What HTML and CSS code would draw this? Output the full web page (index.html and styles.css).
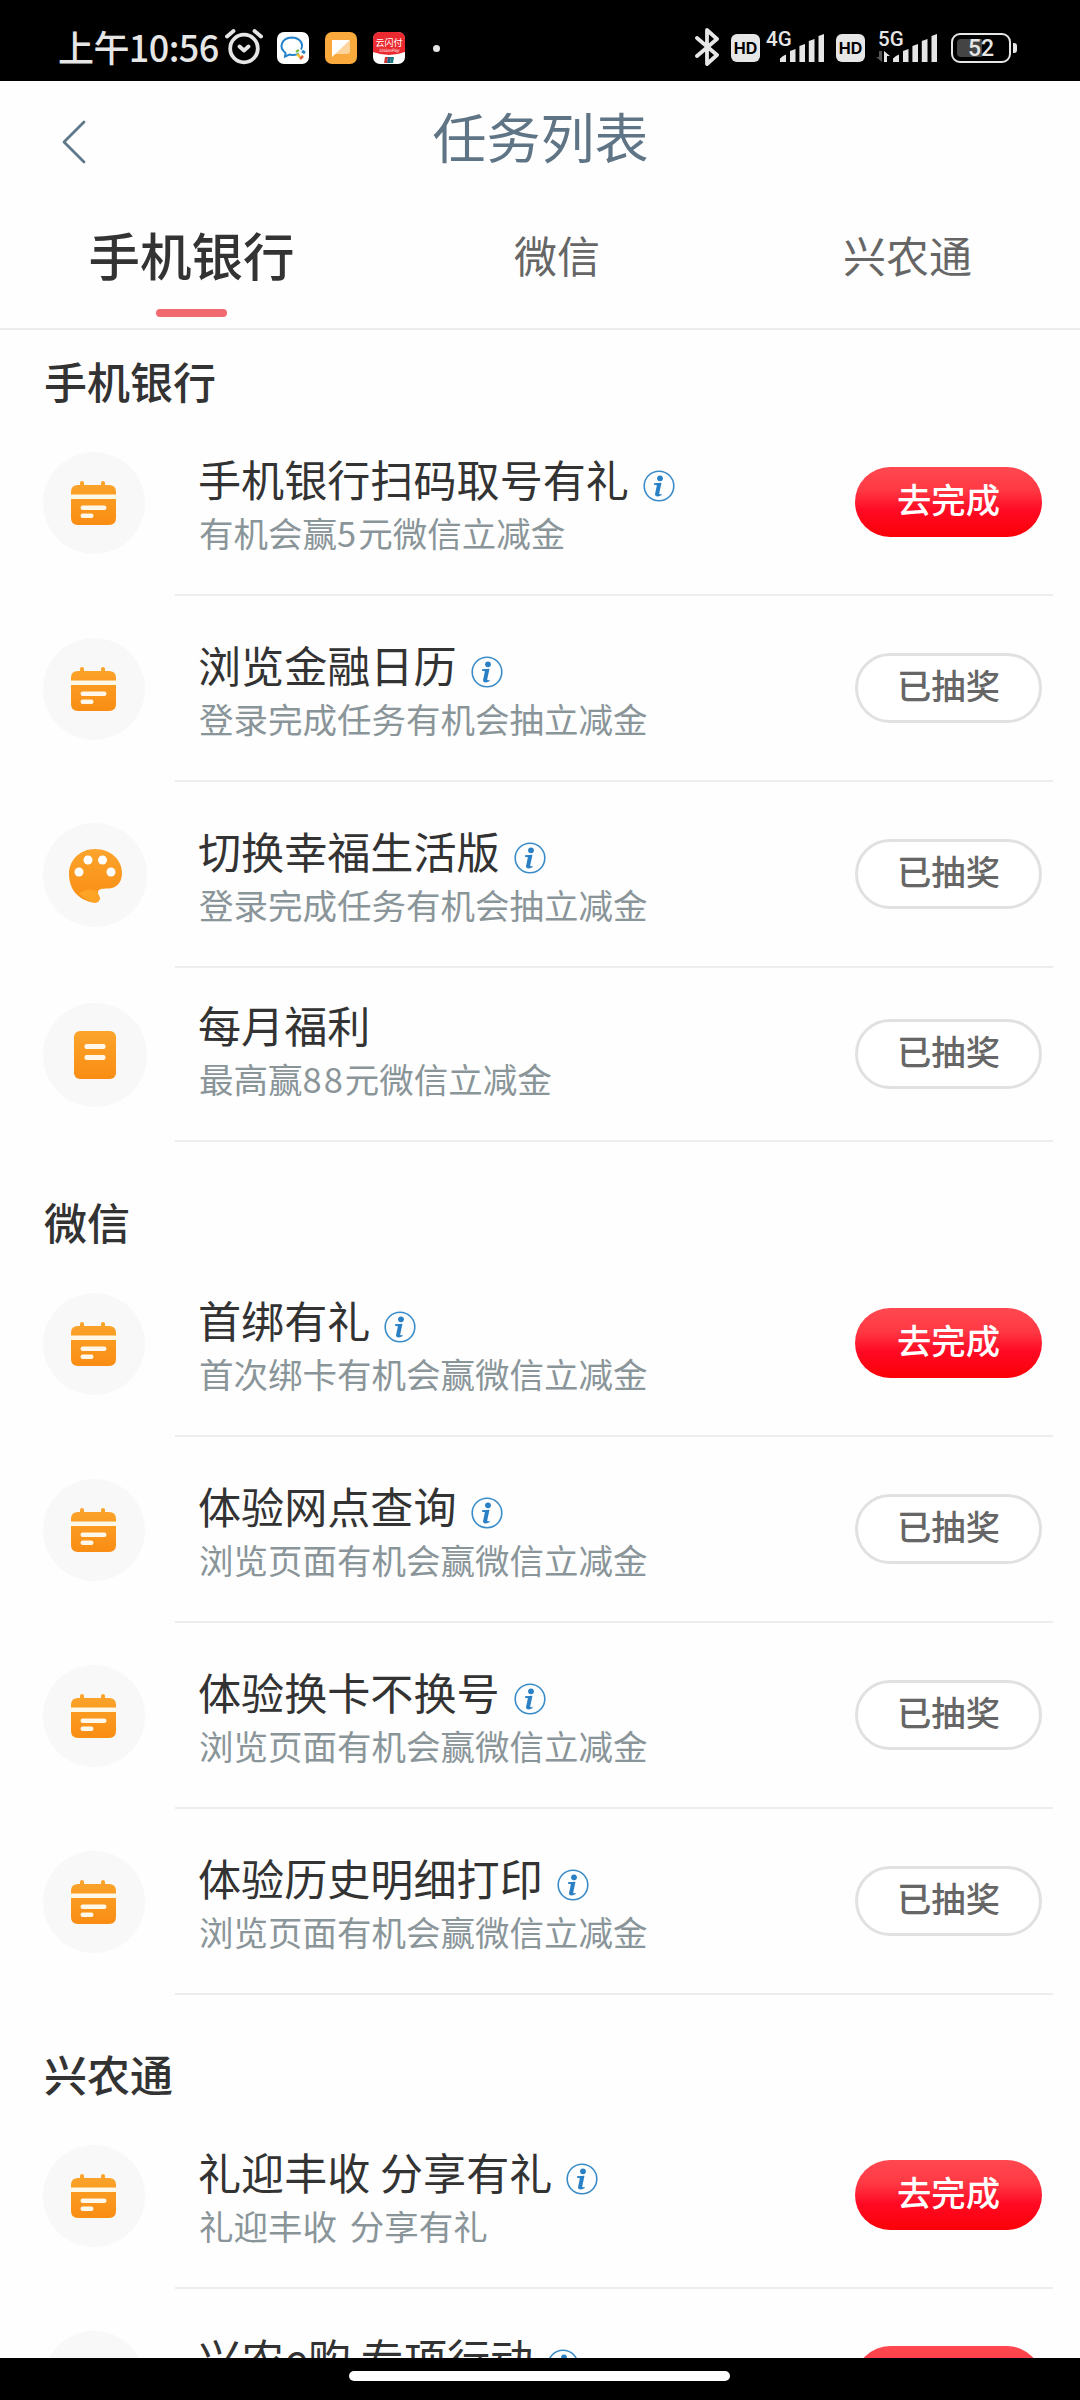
FILE: index.html
```html
<!DOCTYPE html>
<html lang="zh-CN">
<head>
<meta charset="utf-8">
<title>任务列表</title>
<link rel="stylesheet" href="styles.css">
</head>
<body>
<svg class="defs" width="0" height="0" aria-hidden="true">
  <defs>
    <linearGradient id="orange" x1="0" y1="0" x2="0" y2="1">
      <stop offset="0" stop-color="#fba42c"/><stop offset="1" stop-color="#fa8d13"/>
    </linearGradient>
    <symbol id="calendar" viewBox="0 0 102 102">
      <path fill="url(#orange)" d="M39 29q2 0 2 2v2h17v-2q0-2 2-2t2 2v2h4q7 0 7 7v26q0 7-7 7H35q-7 0-7-7V40q0-7 7-7h2v-2q0-2 2-2z"/>
      <path fill="#fff8e6" d="M28 42.500h45v4.500H28z"/>
      <rect x="37.500" y="53.500" width="26" height="4.500" rx="2.200" fill="#fff8ea"/>
      <rect x="37.500" y="61.500" width="13" height="4.500" rx="2.200" fill="#fff8ea"/>
    </symbol>
    <symbol id="palette" viewBox="0 0 104 104">
      <path fill="url(#orange)" d="M52 26C68 26 79 37 79 50C79 60 73 65.500 65 65.500C59 65.500 54.500 66 55 70C55.500 73 58 74 56.500 77C55.500 79.500 53 80 50 79.500C36 77 26 67 26 51C26 37 37 26 52 26z"/>
      <path fill="#ffb534" opacity=".5" d="M36 70q10-6 18.800-2c-.5 4 3.200 6 1.700 9-1 2.500-3.500 3-6.500 2.500q-9-2-14-9.500z"/>
      <g fill="#fff"><circle cx="45" cy="37" r="4.500"/><circle cx="59.500" cy="37" r="4.500"/><circle cx="36" cy="49" r="4.500"/><circle cx="68" cy="49" r="4.500"/></g>
    </symbol>
    <symbol id="note" viewBox="0 0 104 104">
      <rect x="31" y="28" width="42" height="48" rx="6" fill="url(#orange)"/>
      <rect x="41.500" y="41" width="21" height="5" rx="2" fill="#fff8ea"/>
      <rect x="41.500" y="52" width="21" height="5" rx="2" fill="#fff8ea"/>
    </symbol>
    <symbol id="info" viewBox="0 0 32 32">
      <circle cx="16" cy="16" r="14.800" fill="none" stroke="#3a8cc8" stroke-width="1.600"/>
      <circle cx="17" cy="8.300" r="2.900" fill="#2a80c4"/>
      <path fill="#2a80c4" d="M11 13.200l7.500-.4-2.300 10.700q-.1 1.300 2.600.2l-.4 1.500q-6.500 2.800-6.400-.9l1.900-9-2.900-.6z"/>
    </symbol>
    <symbol id="bars" viewBox="0 0 45 30">
      <path fill="#e6e6e6" d="M0 29v-3.500q3-3 6-4V29zM10 29V18l5.500-2v13zM19.400 29V13l5.600-2v18zM28.800 29V8l5.700-2v23zM38.500 29V3l5.500-2v28z"/>
    </symbol>
  </defs>
</svg>

<header class="status">
  <div class="status-left">
    <span class="clock">上午10:56</span>
    <svg class="alarm" viewBox="0 0 38 36"><g fill="none" stroke="#e6e6e6" stroke-width="3.800" stroke-linecap="round" stroke-linejoin="round"><circle cx="19" cy="19.500" r="13.800"/><path d="M2 7.500L8.500 2M36 7.500L29.500 2M14.500 17.500l4.500 4 4.500-4"/></g></svg>
    <svg class="app" viewBox="0 0 32 32"><rect width="32" height="32" rx="7" fill="#fff"/><path d="M22 21.500q-4 2.500-9.500 1L8 24.500l.5-3.500C1 15 5 6 14.500 5.500 23 5.500 27 12 24 17.500" fill="none" stroke="#2583cb" stroke-width="2"/><path d="M19 20l3-2" stroke="#7cc04b" stroke-width="2.500"/><path d="M25 19l3 2" stroke="#2583cb" stroke-width="3"/><path d="M20 22l3 3" stroke="#f2c32c" stroke-width="2.500"/><path d="M23 27l3-3" stroke="#e55b3c" stroke-width="2.500"/></svg>
    <svg class="app" viewBox="0 0 32 32"><rect width="32" height="32" rx="7" fill="#faa93c"/><path fill="#fcd49c" d="M7 9h18v10q0 3-3 3H7z"/><path fill="#fff" d="M7 8h18L7 25z"/></svg>
    <svg class="app" viewBox="0 0 32 32"><rect width="32" height="32" rx="7" fill="#fff"/><path fill="#ea2a30" d="M0 20V7q0-7 7-7h18q7 0 7 7v13q-16 6-32 0z"/><text x="16" y="14" class="pay">云闪付</text><text x="16" y="20" class="pay-en">UnionPay</text><path fill="#c33" d="M12 25h3l-1 6h-3z"/><path fill="#235a80" d="M15 25h3l-1 6h-3z"/><path fill="#167a78" d="M18 25h3l-1 6h-3z"/></svg>
    <span class="dot"></span>
  </div>
  <div class="status-right">
    <svg class="bt" viewBox="0 0 24 38"><path d="M2 10l20 17-10 9V2l10 9L2 28" fill="none" stroke="#e6e6e6" stroke-width="3.800" stroke-linejoin="round" stroke-linecap="round"/></svg>
    <span class="hd hd-one">HD</span>
    <span class="net">4G</span>
    <svg class="bars"><use href="#bars"/></svg>
    <span class="hd hd-two">HD</span>
    <span class="net net-two">5G<svg class="arrows" viewBox="0 0 14 11"><path fill="#555" d="M3 0h3v11L0 6h3z"/><path fill="#e6e6e6" d="M8 0l6 5h-3v6H8z"/></svg></span>
    <svg class="bars"><use href="#bars"/></svg>
    <span class="battery"><span class="level">52</span></span>
    <span class="cap"></span>
  </div>
</header>

<nav class="title-bar">
  <svg class="back" viewBox="0 0 24 44"><path d="M22 2L2 22l20 20" fill="none" stroke="#5f7888" stroke-width="2.800" stroke-linecap="round" stroke-linejoin="round"/></svg>
  <h1>任务列表</h1>
</nav>

<div class="tabs">
  <span class="tab active">手机银行</span>
  <span class="tab">微信</span>
  <span class="tab last">兴农通</span>
</div>

<main>
  <section>
    <h2>手机银行</h2>
    <article class="task"><svg class="icon"><use href="#calendar"/></svg><div class="body"><div class="text"><h3>手机银行扫码取号有礼<svg class="info"><use href="#info"/></svg></h3><p>有机会赢<span class="num">5</span>元微信立减金</p></div><button class="btn go">去完成</button></div></article>
    <article class="task"><svg class="icon"><use href="#calendar"/></svg><div class="body"><div class="text"><h3>浏览金融日历<svg class="info"><use href="#info"/></svg></h3><p>登录完成任务有机会抽立减金</p></div><button class="btn">已抽奖</button></div></article>
    <article class="task"><svg class="icon wide"><use href="#palette"/></svg><div class="body"><div class="text"><h3>切换幸福生活版<svg class="info"><use href="#info"/></svg></h3><p>登录完成任务有机会抽立减金</p></div><button class="btn">已抽奖</button></div></article>
    <article class="task plain"><svg class="icon wide"><use href="#note"/></svg><div class="body"><div class="text"><h3>每月福利</h3><p>最高赢<span class="num">88</span>元微信立减金</p></div><button class="btn">已抽奖</button></div></article>
  </section>
  <section>
    <h2>微信</h2>
    <article class="task"><svg class="icon"><use href="#calendar"/></svg><div class="body"><div class="text"><h3>首绑有礼<svg class="info"><use href="#info"/></svg></h3><p>首次绑卡有机会赢微信立减金</p></div><button class="btn go">去完成</button></div></article>
    <article class="task"><svg class="icon"><use href="#calendar"/></svg><div class="body"><div class="text"><h3>体验网点查询<svg class="info"><use href="#info"/></svg></h3><p>浏览页面有机会赢微信立减金</p></div><button class="btn">已抽奖</button></div></article>
    <article class="task"><svg class="icon"><use href="#calendar"/></svg><div class="body"><div class="text"><h3>体验换卡不换号<svg class="info"><use href="#info"/></svg></h3><p>浏览页面有机会赢微信立减金</p></div><button class="btn">已抽奖</button></div></article>
    <article class="task"><svg class="icon"><use href="#calendar"/></svg><div class="body"><div class="text"><h3>体验历史明细打印<svg class="info"><use href="#info"/></svg></h3><p>浏览页面有机会赢微信立减金</p></div><button class="btn">已抽奖</button></div></article>
  </section>
  <section>
    <h2>兴农通</h2>
    <article class="task"><svg class="icon"><use href="#calendar"/></svg><div class="body"><div class="text"><h3>礼迎丰收 分享有礼<svg class="info"><use href="#info"/></svg></h3><p class="spaced">礼迎丰收 分享有礼</p></div><button class="btn go">去完成</button></div></article>
    <article class="task"><svg class="icon"><use href="#calendar"/></svg><div class="body"><div class="text"><h3>兴农e购 专项行动<svg class="info"><use href="#info"/></svg></h3></div><button class="btn go">去完成</button></div></article>
  </section>
</main>

<footer class="home"><span class="pill"></span></footer>
</body>
</html>
```
FILE: styles.css
```css
* { box-sizing: border-box; margin: 0; }
body {
  width: 1080px;
  height: 2400px;
  overflow: hidden;
  display: flex;
  flex-direction: column;
  background: #fefefe;
  color: #333;
  font-family: "Noto Sans CJK SC", sans-serif;
}
svg { display: block; flex: none; }
.defs { position: absolute; }

.status {
  height: 81px;
  flex: none;
  background: #000;
  color: #e6e6e6;
  display: flex;
  justify-content: space-between;
  padding: 0 63px 0 58px;
}
.status-left, .status-right { display: flex; align-items: center; padding-top: 15px; }
.clock { width: 167px; margin-top: -4px; font-size: 36px; font-weight: 500; line-height: 40px; letter-spacing: -0.6px; white-space: nowrap; }
.alarm { width: 38px; height: 36px; margin: -2px 14px 0 0; }
.app { width: 32px; height: 32px; margin-right: 16px; }
.pay { font-size: 9px; fill: #fff; text-anchor: middle; }
.pay-en { font-size: 4.5px; fill: #fff; text-anchor: middle; font-style: italic; }
.dot { width: 7px; height: 7px; border-radius: 50%; background: #e6e6e6; margin-left: 12px; }
.bt { width: 24px; height: 38px; margin-top: -2px; }
.hd {
  width: 29px;
  height: 28px;
  border-radius: 6px;
  background: #e6e6e6;
  color: #000;
  font: 700 16px/28px Inter, sans-serif;
  text-align: center;
}
.hd-one { margin-left: 12px; }
.hd-two { margin-left: 11px; }
.net { width: 14px; height: 34px; margin: 0 0 0 6px; font: 500 20.5px/16px Roboto, sans-serif; }
.net-two { margin-left: 13px; width: 15px; }
.arrows { width: 14px; height: 11px; margin: 4px 0 0 -2px; }
.bars { width: 45px; height: 30px; }
.battery {
  width: 60px;
  height: 30px;
  margin-left: 13px;
  border: 2.5px solid #e6e6e6;
  border-radius: 9px;
  padding: 3.5px 4px;
}
.level {
  display: block;
  height: 18px;
  border-radius: 4px;
  background: linear-gradient(90deg, #444 25px, transparent 25px);
  font: 500 23px/20px Roboto, sans-serif;
  text-align: center;
}
.cap { width: 4px; height: 10px; margin-left: 2px; border-radius: 0 3px 3px 0; background: #e6e6e6; }

.title-bar { height: 119px; flex: none; display: grid; grid-template-columns: 1fr auto 1fr; padding: 0 61px 0 62px; }
.back { width: 24px; height: 44px; margin-top: 39px; }
h1 { font-size: 54px; line-height: 60px; margin-top: 25px; font-weight: 400; color: #5f7484; }

.tabs {
  height: 130px;
  flex: none;
  display: grid;
  grid-template-columns: 383px 348px 1fr;
  border-bottom: 2px solid #ececec;
}
.tab { font-size: 43px; line-height: 60px; padding-top: 24px; text-align: center; color: #666; }
.tab.last { padding-left: 4px; }
.tab.active { font-size: 51.5px; font-weight: 500; color: #333; }
.tab.active::after {
  content: "";
  display: block;
  width: 71px;
  height: 8px;
  margin: 25px auto 0;
  border-radius: 4px;
  background: #f16a70;
}

main { height: 2028px; flex: none; overflow: hidden; }
h2 { height: 80px; padding: 20px 0 0 44px; font-size: 43px; line-height: 60px; font-weight: 500; }
section + section h2 { height: 109px; padding-top: 49px; }
section + section + section h2 { height: 108px; padding-top: 48px; }
.task { height: 186px; display: flex; align-items: center; padding: 0 27px 0 43px; }
.icon { width: 102px; height: 102px; border-radius: 50%; background: #f8f8f8; }
.icon.wide { width: 104px; height: 104px; margin-right: -2px; }
.body {
  flex: 1;
  height: 100%;
  margin-left: 30px;
  padding: 0 11px 0 23px;
  display: flex;
  align-items: center;
  justify-content: space-between;
  border-bottom: 2px solid #ededed;
}
.text { align-self: flex-start; padding-top: 39px; }
h3 { display: flex; font-size: 43.1px; line-height: 58px; font-weight: 400; color: #333; }
.info { width: 32px; height: 32px; margin: 21px 0 0 14px; }
p { font-size: 34.5px; line-height: 50px; margin: 0 0 0 1px; color: #8a9599; }
.num { letter-spacing: 2px; }
.spaced { word-spacing: 5px; }
.plain { height: 174px; }
.plain .text { padding-top: 27px; }
.btn {
  width: 187px;
  height: 70px;
  border: 3px solid #e1e1e1;
  border-radius: 35px;
  background: #fff;
  color: #666;
  font: 500 34.3px/50px "Noto Sans CJK SC", sans-serif;
  padding: 0 0 8px;
}
.btn.go {
  border: 0;
  background: linear-gradient(#ff4850, #ff3944 33%, #ff0a24 62%, #fb0007);
  color: #fff;
}

.home { height: 42px; flex: none; background: #000; display: flex; justify-content: center; padding: 13px 1px 0 0; }
.pill { width: 381px; height: 10px; border-radius: 5px; background: #fff; }
```
